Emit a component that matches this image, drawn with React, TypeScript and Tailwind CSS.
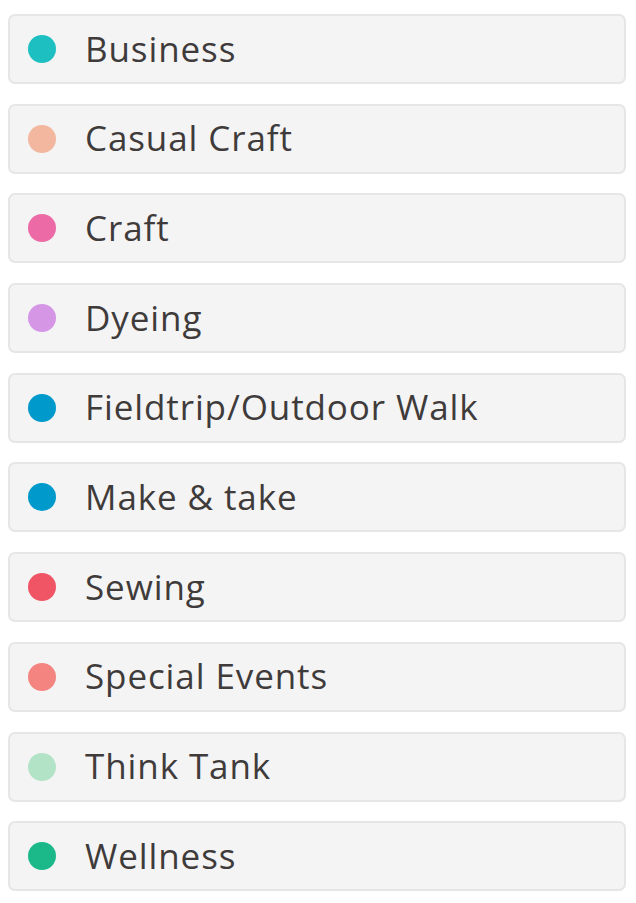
import React from 'react';

interface Category {
  name: string;
  color: string;
}

const categories: Category[] = [
  { name: 'Business', color: '#1ebfc0' },
  { name: 'Casual Craft', color: '#f2b79e' },
  { name: 'Craft', color: '#ec6ba6' },
  { name: 'Dyeing', color: '#d596e6' },
  { name: 'Fieldtrip/Outdoor Walk', color: '#0099cc' },
  { name: 'Make & take', color: '#0099cc' },
  { name: 'Sewing', color: '#f05565' },
  { name: 'Special Events', color: '#f4847f' },
  { name: 'Think Tank', color: '#b2e3c6' },
  { name: 'Wellness', color: '#1bb88a' },
];

const App: React.FC = () => {
  return (
    <div className="min-h-screen bg-white pt-[14px] px-2 font-['Open_Sans',sans-serif]">
      <ul className="flex flex-col gap-[19.7px] w-[618px]">
        {categories.map((cat) => (
          <li
            key={cat.name}
            className="h-[70px] flex items-center bg-[#f4f4f4] border-2 border-[#e6e6e6] rounded-[7px] pl-[18px]"
          >
            <span
              className="w-[28px] h-[28px] rounded-full shrink-0"
              style={{ backgroundColor: cat.color }}
            />
            <span className="ml-[29px] pb-[2px] text-[35px] font-medium tracking-[0.9px] text-[#3f3b3b] leading-none">
              {cat.name}
            </span>
          </li>
        ))}
      </ul>
    </div>
  );
};

export default App;
